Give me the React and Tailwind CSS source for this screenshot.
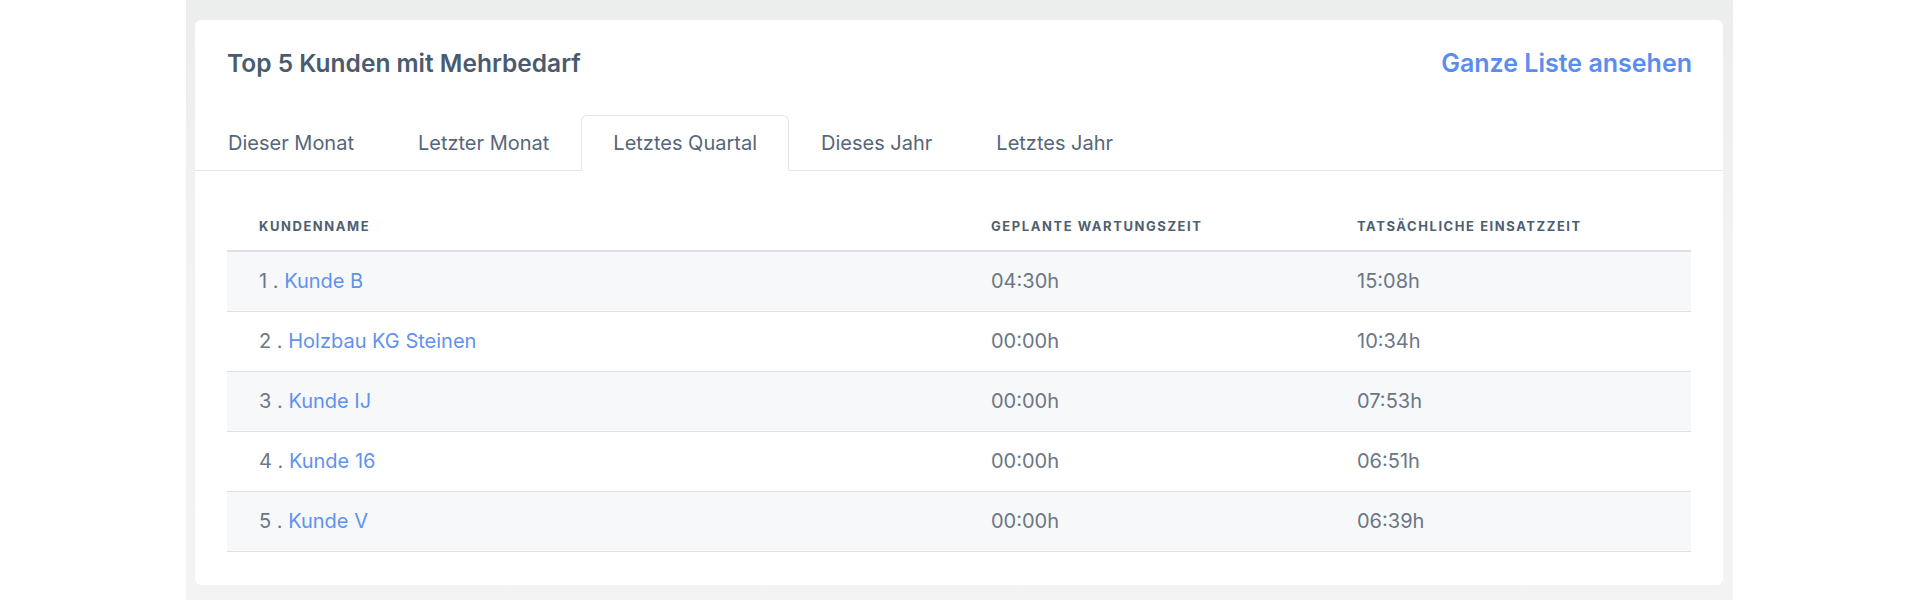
import React, { useState } from 'react'

const tabs = ['Dieser Monat', 'Letzter Monat', 'Letztes Quartal', 'Dieses Jahr', 'Letztes Jahr']

const kunden = [
  { name: 'Kunde B', geplant: '04:30h', tatsaechlich: '15:08h' },
  { name: 'Holzbau KG Steinen', geplant: '00:00h', tatsaechlich: '10:34h' },
  { name: 'Kunde IJ', geplant: '00:00h', tatsaechlich: '07:53h' },
  { name: 'Kunde 16', geplant: '00:00h', tatsaechlich: '06:51h' },
  { name: 'Kunde V', geplant: '00:00h', tatsaechlich: '06:39h' },
]

export default function App() {
  const [activeTab, setActiveTab] = useState('Letztes Quartal')

  return (
    <div className="w-full h-[600px] bg-white flex justify-center" style={{ fontFamily: 'Inter, "Noto Sans", sans-serif' }}>
      <div className="w-[1547px] ml-[-1px] h-full bg-gradient-to-b from-[#eceeee] via-[#f2f3f3] to-[#f2f3f3] pt-5 pl-[9px] pr-[10px]">
        <div className="bg-white rounded-md pb-[33px]">
          <div className="flex items-center justify-between px-8 pt-[27px]">
            <h2 className="text-[24.5px] leading-8 font-semibold text-[#4b5b6e]">Top 5 Kunden mit Mehrbedarf</h2>
            <a href="#" className="text-[25px] leading-8 font-semibold text-[#5b8def] mr-[-1px]">Ganze Liste ansehen</a>
          </div>

          <div className="flex mt-9 border-b border-[#e3e6ea] pl-[1px]">
            {tabs.map(tab => (
              <button
                key={tab}
                onClick={() => setActiveTab(tab)}
                className={
                  tab === activeTab
                    ? 'px-[31px] py-[13px] text-xl leading-7 text-[#56667a] bg-white border border-[#e3e6ea] border-b-white rounded-t-md -mb-px'
                    : 'px-[31px] py-[13px] text-xl leading-7 text-[#56667a] border border-transparent -mb-px'
                }
              >
                {tab}
              </button>
            ))}
          </div>

          <div className="px-8 pt-[31px]">
            <table className="w-full table-fixed border-collapse">
              <thead>
                <tr className="border-b-2 border-[#dcdfe5]">
                  <th className="w-1/2 text-left px-8 py-4 text-[13px] leading-4 font-bold tracking-[0.12em] uppercase text-[#4f5f72]">Kundenname</th>
                  <th className="w-1/4 text-left px-8 py-4 text-[13px] leading-4 font-bold tracking-[0.12em] uppercase text-[#4f5f72]">Geplante Wartungszeit</th>
                  <th className="w-1/4 text-left px-8 py-4 text-[13px] leading-4 font-bold tracking-[0.12em] uppercase text-[#4f5f72]">Tatsächliche Einsatzzeit</th>
                </tr>
              </thead>
              <tbody>
                {kunden.map((k, i) => (
                  <tr key={k.name} className={i % 2 === 0 ? 'bg-[#f7f8fa] border-b border-[#dee1e6]' : 'bg-white border-b border-[#dee1e6]'}>
                    <td className="px-8 py-4 text-xl leading-[27px] text-[#6b7686]">
                      {i + 1} . <a href="#" className="text-[#5f92f0]">{k.name}</a>
                    </td>
                    <td className="px-8 py-4 text-xl leading-[27px] text-[#6b7686]">{k.geplant}</td>
                    <td className="px-8 py-4 text-xl leading-[27px] text-[#6b7686]">{k.tatsaechlich}</td>
                  </tr>
                ))}
              </tbody>
            </table>
          </div>
        </div>
      </div>
    </div>
  )
}
